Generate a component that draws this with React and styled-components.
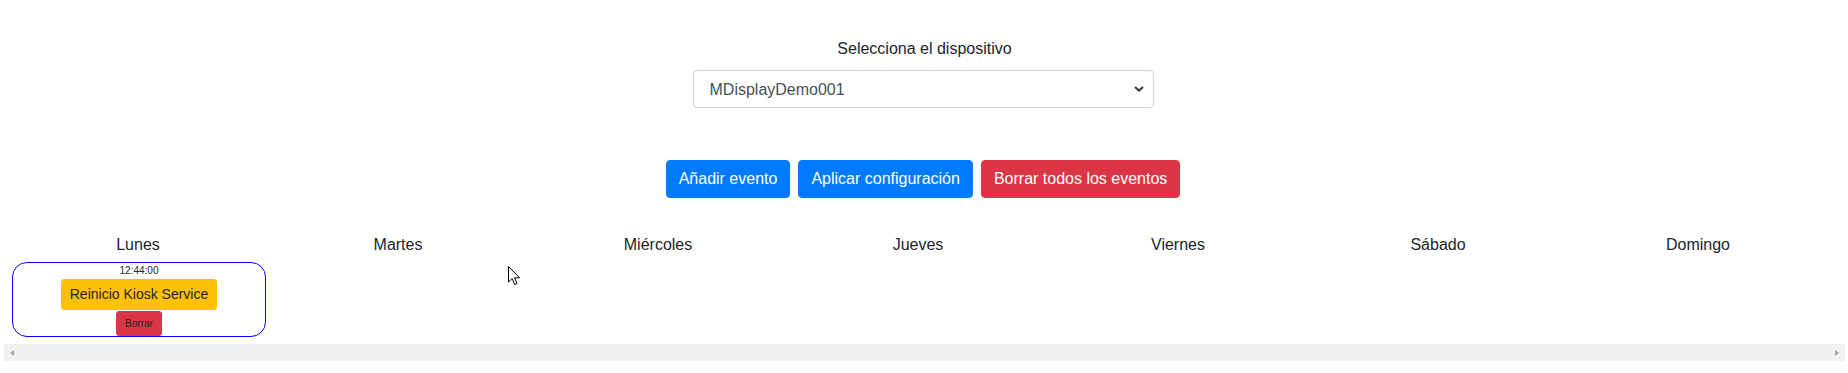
import React, { useState } from 'react';
import styled, { createGlobalStyle } from 'styled-components';

const days = ['Lunes', 'Martes', 'Miércoles', 'Jueves', 'Viernes', 'Sábado', 'Domingo'];

const events = {
  Lunes: [{ id: 1, time: '12:44:00', name: 'Reinicio Kiosk Service' }],
};

function App() {
  const [device, setDevice] = useState('MDisplayDemo001');

  return (
    <Page>
      <GlobalStyle />
      <DevicePicker>
        <Label htmlFor="device">Selecciona el dispositivo</Label>
        <SelectWrap>
          <Select id="device" value={device} onChange={(e) => setDevice(e.target.value)}>
            <option>MDisplayDemo001</option>
          </Select>
          <Chevron width="10" height="6" viewBox="0 0 10 6">
            <path d="M1 1 L5 4.6 L9 1" fill="none" stroke="#343a40" strokeWidth="2" />
          </Chevron>
        </SelectWrap>
      </DevicePicker>

      <Actions>
        <Button variant="primary">Añadir evento</Button>
        <Button variant="primary">Aplicar configuración</Button>
        <Button variant="danger">Borrar todos los eventos</Button>
      </Actions>

      <Week>
        <Days>
          {days.map((day) => (
            <Day key={day}>
              <DayName>{day}</DayName>
              {(events[day] || []).map((ev) => (
                <EventCard key={ev.id}>
                  <Time>{ev.time}</Time>
                  <EventName>{ev.name}</EventName>
                  <DeleteButton>Borrar</DeleteButton>
                </EventCard>
              ))}
            </Day>
          ))}
        </Days>
        <Scrollbar>
          <Arrow dir="left" />
          <Arrow dir="right" />
        </Scrollbar>
      </Week>

      <Cursor width="13" height="20" viewBox="0 0 13 20">
        <path
          d="M0.5 0.5 L0.5 16 L4.2 12.6 L6.7 18.6 L9 17.6 L6.6 11.8 L11.6 11.8 Z"
          fill="#fff"
          stroke="#000"
          strokeWidth="1"
          strokeLinejoin="round"
        />
      </Cursor>
    </Page>
  );
}

const GlobalStyle = createGlobalStyle`
  body {
    margin: 0;
    background: #fff;
    font-family: "Liberation Sans", Arial, sans-serif;
    color: #212529;
  }
`;

const Page = styled.div`
  position: relative;
  padding: 37px 3px 0 4px;
  width: 1848px;
  height: 373px;
  box-sizing: border-box;
  overflow: hidden;
`;

const DevicePicker = styled.div`
  display: flex;
  flex-direction: column;
  align-items: center;
  gap: 9px;
`;

const Label = styled.label`
  font-size: 16px;
  line-height: 24px;
  color: #212529;
`;

const SelectWrap = styled.div`
  position: relative;
  width: 461px;
  margin-left: -3px;
`;

const Select = styled.select`
  appearance: none;
  width: 100%;
  height: 38px;
  padding: 0 32px 0 16px;
  border: 1px solid #ced4da;
  border-radius: 4px;
  background: #fff;
  font-family: "Liberation Sans", Arial, sans-serif;
  font-size: 16px;
  color: #495057;
  outline: none;
`;

const Chevron = styled.svg`
  position: absolute;
  right: 10px;
  top: 16px;
  pointer-events: none;
`;

const Actions = styled.div`
  display: flex;
  justify-content: center;
  gap: 8px;
  margin-top: 52px;
  margin-left: -3px;
`;

const Button = styled.button`
  font-family: "Liberation Sans", Arial, sans-serif;
  font-size: 16px;
  line-height: 24px;
  padding: 6px 12px;
  border-radius: 4px;
  color: #fff;
  border: 1px solid ${(p) => (p.variant === 'danger' ? '#dc3545' : '#007bff')};
  background: ${(p) => (p.variant === 'danger' ? '#dc3545' : '#007bff')};
  cursor: pointer;
`;

const Week = styled.div`
  margin-top: 35px;
`;

const Days = styled.div`
  display: grid;
  grid-template-columns: repeat(7, 260px);
  padding-left: 4px;
`;

const Day = styled.div`
  display: flex;
  flex-direction: column;
  align-items: stretch;
`;

const DayName = styled.div`
  text-align: center;
  font-size: 16px;
  line-height: 24px;
  margin-bottom: 5px;
  height: 24px;
`;

const EventCard = styled.div`
  display: flex;
  flex-direction: column;
  align-items: center;
  margin: 0 2px 0 4px;
  border: 1px solid #0000ff;
  border-radius: 15px;
  height: 75px;
  box-sizing: border-box;
`;

const Time = styled.div`
  font-size: 10px;
  line-height: 16px;
`;

const EventName = styled.button`
  font-family: "Liberation Sans", Arial, sans-serif;
  font-size: 14px;
  line-height: 21px;
  padding: 4px 8px;
  border: 1px solid #ffc107;
  border-radius: 3px;
  background: #ffc107;
  color: #212529;
`;

const DeleteButton = styled.button`
  margin-top: 1px;
  font-family: "Liberation Sans", Arial, sans-serif;
  font-size: 10px;
  line-height: 15px;
  height: 25px;
  padding: 4px 8px;
  border: 1px solid #dc3545;
  border-radius: 3px;
  background: #dc3545;
  color: #212529;
`;

const Scrollbar = styled.div`
  display: flex;
  justify-content: space-between;
  align-items: center;
  height: 17px;
  margin-top: 7px;
  background: #f0f0f0;
  padding: 0 6px;
`;

const Arrow = styled.span`
  width: 0;
  height: 0;
  border-top: 3.5px solid transparent;
  border-bottom: 3.5px solid transparent;
  ${(p) =>
    p.dir === 'left'
      ? 'border-right: 4px solid #a3a3a3;'
      : 'border-left: 4px solid #a3a3a3;'}
`;

const Cursor = styled.svg`
  position: absolute;
  left: 508px;
  top: 266px;
`;

export default App;
